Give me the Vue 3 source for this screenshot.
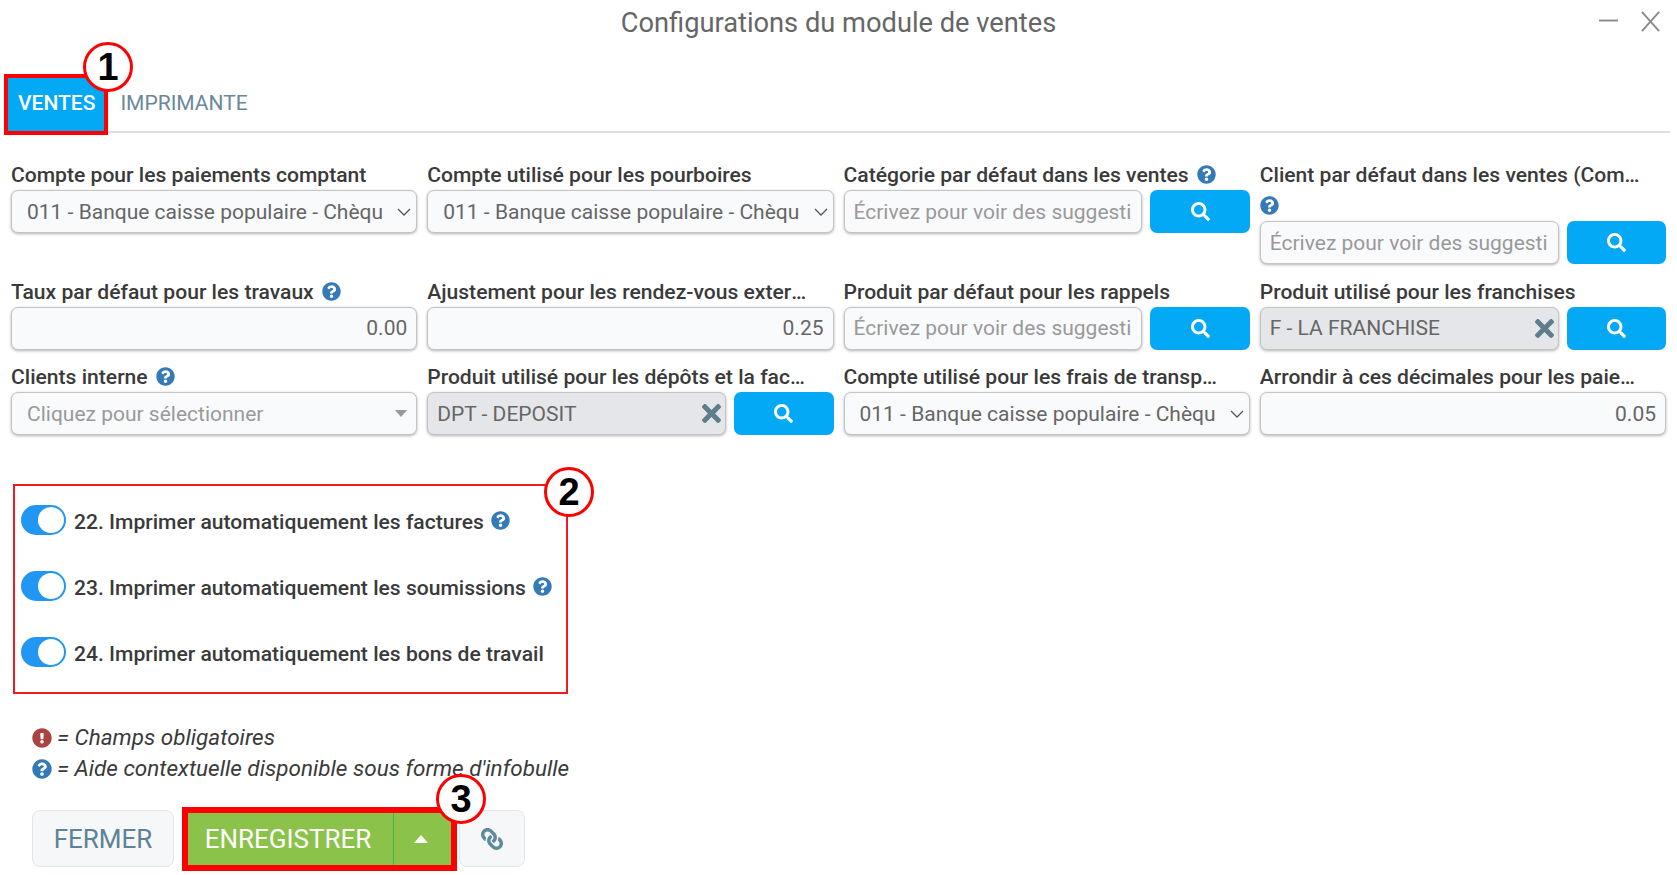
<script setup>
const helpIcon = 'M504 256c0 136.997-111.043 248-248 248S8 392.997 8 256C8 119.083 119.043 8 256 8s248 111.083 248 248zM262.655 90c-54.497 0-89.255 22.957-116.549 63.758-3.536 5.286-2.353 12.415 2.715 16.258l34.699 26.31c5.205 3.947 12.621 3.008 16.665-2.122 17.864-22.658 30.113-35.797 57.303-35.797 20.429 0 45.698 13.148 45.698 32.958 0 14.976-12.363 22.667-32.534 33.976C247.128 238.528 216 254.941 216 296v4c0 6.627 5.373 12 12 12h56c6.627 0 12-5.373 12-12v-1.333c0-28.462 83.186-29.647 83.186-106.667 0-58.002-60.165-102-116.531-102zM256 338c-25.365 0-46 20.635-46 46 0 25.364 20.635 46 46 46s46-20.636 46-46c0-25.365-20.635-46-46-46z'
const alertIcon = 'M504 256c0 136.997-111.043 248-248 248S8 392.997 8 256C8 119.083 119.043 8 256 8s248 111.083 248 248zm-248 50c-25.405 0-46 20.595-46 46s20.595 46 46 46 46-20.595 46-46-20.595-46-46-46zm-43.673-165.346l7.418 136c.347 6.364 5.609 11.346 11.982 11.346h48.546c6.373 0 11.635-4.982 11.982-11.346l7.418-136c.375-6.874-5.098-12.654-11.982-12.654h-63.383c-6.884 0-12.356 5.78-11.981 12.654z'
const searchIcon = 'M505 442.7L405.3 343c-4.5-4.5-10.6-7-17-7H372c27.6-35.3 44-79.7 44-128C416 93.1 322.9 0 208 0S0 93.1 0 208s93.1 208 208 208c48.3 0 92.7-16.4 128-44v16.3c0 6.4 2.5 12.5 7 17l99.7 99.7c9.4 9.4 24.6 9.4 33.9 0l28.3-28.3c9.4-9.4 9.4-24.6.1-34zM208 336c-70.7 0-128-57.2-128-128 0-70.7 57.2-128 128-128 70.7 0 128 57.2 128 128 0 70.7-57.2 128-128 128z'
const clearIcon = 'M242.72 256l100.07-100.07c12.28-12.28 12.28-32.19 0-44.48l-22.24-22.24c-12.28-12.28-32.19-12.28-44.48 0L176 189.28 75.93 89.21c-12.28-12.28-32.19-12.28-44.48 0L9.21 111.45c-12.28 12.28-12.28 32.19 0 44.48L109.28 256 9.21 356.07c-12.28 12.28-12.28 32.19 0 44.48l22.24 22.24c12.28 12.28 32.2 12.28 44.48 0L176 322.72l100.07 100.07c12.28 12.28 32.2 12.28 44.48 0l22.24-22.24c12.28-12.28 12.28-32.19 0-44.48L242.72 256z'
const linkIcon = 'M326.612 185.391c59.747 59.809 58.927 155.698.36 214.59-.11.12-.24.25-.36.37l-67.2 67.2c-59.27 59.27-155.699 59.262-214.96 0-59.27-59.26-59.27-155.7 0-214.96l37.106-37.106c9.84-9.84 26.786-3.3 27.294 10.606.648 17.722 3.826 35.527 9.69 52.721 1.986 5.822.567 12.262-3.783 16.612l-13.087 13.087c-28.026 28.026-28.905 73.66-1.155 101.96 28.024 28.579 74.086 28.749 102.325.51l67.2-67.19c28.191-28.191 28.073-73.757 0-101.83-3.701-3.694-7.429-6.564-10.341-8.569a16.037 16.037 0 0 1-6.947-12.606c-.396-10.567 3.348-21.456 11.698-29.806l21.054-21.055c5.521-5.521 14.182-6.199 20.584-1.731a152.482 152.482 0 0 1 20.522 17.197zM467.547 44.449c-59.261-59.262-155.69-59.27-214.96 0l-67.2 67.2c-.12.12-.25.25-.36.37-58.566 58.892-59.387 154.781.36 214.59a152.454 152.454 0 0 0 20.521 17.196c6.402 4.468 15.064 3.789 20.584-1.731l21.054-21.055c8.35-8.35 12.094-19.239 11.698-29.806a16.037 16.037 0 0 0-6.947-12.606c-2.912-2.005-6.64-4.875-10.341-8.569-28.073-28.073-28.191-73.639 0-101.83l67.2-67.19c28.239-28.239 74.3-28.069 102.325.51 27.75 28.3 26.872 73.934-1.155 101.96l-13.087 13.087c-4.35 4.35-5.769 10.79-3.783 16.612 5.864 17.194 9.042 34.999 9.69 52.721.509 13.906 17.454 20.446 27.294 10.606l37.106-37.106c59.27-59.26 59.27-155.7.001-214.959z'

const compte = '011 - Banque caisse populaire - Chèque'
const suggest = 'Écrivez pour voir des suggestions'

const fields = [
  { label: 'Compte pour les paiements comptant', type: 'select', value: compte },
  { label: 'Compte utilisé pour les pourboires', type: 'select', value: compte },
  { label: 'Catégorie par défaut dans les ventes', help: true, type: 'search' },
  { label: 'Client par défaut dans les ventes (Compte client)', help: true, type: 'search' },
  { label: 'Taux par défaut pour les travaux', help: true, type: 'number', value: '0.00' },
  { label: 'Ajustement pour les rendez-vous externes (heures)', type: 'number', value: '0.25' },
  { label: 'Produit par défaut pour les rappels', type: 'search' },
  { label: 'Produit utilisé pour les franchises', type: 'search', value: 'F - LA FRANCHISE' },
  { label: 'Clients interne', help: true, type: 'multi' },
  { label: 'Produit utilisé pour les dépôts et la facturation', type: 'search', value: 'DPT - DEPOSIT' },
  { label: 'Compte utilisé pour les frais de transport et livraison', type: 'select', value: compte },
  { label: 'Arrondir à ces décimales pour les paiements comptant', type: 'number', value: '0.05' }
]

const toggles = [
  { label: '22. Imprimer automatiquement les factures', help: true },
  { label: '23. Imprimer automatiquement les soumissions', help: true },
  { label: '24. Imprimer automatiquement les bons de travail', help: false }
]

const badges = [
  { n: 1, cls: 'badge-1' },
  { n: 2, cls: 'badge-2' },
  { n: 3, cls: 'badge-3' }
]
</script>

<template>
  <div class="page">
    <header class="title-bar">
      <h1 class="title">Configurations du module de ventes</h1>
      <div class="window-btns">
        <svg class="win-icon" viewBox="0 0 22 22"><path d="M1 10h20" /></svg>
        <svg class="win-icon" viewBox="0 0 22 22"><path d="M2 1l18 20M20 1L2 21" /></svg>
      </div>
    </header>

    <nav class="tabs">
      <span class="tab active">VENTES</span>
      <span class="tab">IMPRIMANTE</span>
    </nav>

    <section class="form-grid">
      <div v-for="f in fields" :key="f.label" class="field">
        <label class="field-label">
          <span class="label-text">{{ f.label }}</span>
          <svg v-if="f.help" class="help" viewBox="0 0 512 512"><path :d="helpIcon" /></svg>
        </label>

        <div v-if="f.type === 'select'" class="select-wrap">
          <select class="control select">
            <option>{{ f.value }}</option>
          </select>
          <svg class="chevron" viewBox="0 0 14 8"><path d="M1 1l6 6 6-6" /></svg>
        </div>

        <input v-else-if="f.type === 'number'" class="control number" type="text" :value="f.value" readonly />

        <div v-else-if="f.type === 'multi'" class="control multi">
          <span>Cliquez pour sélectionner</span>
          <i class="multi-caret"></i>
        </div>

        <div v-else class="search-row">
          <div v-if="f.value" class="control picked">
            <span>{{ f.value }}</span>
            <svg class="clear" viewBox="0 80 352 352"><path :d="clearIcon" /></svg>
          </div>
          <input v-else class="control suggest" type="text" :placeholder="suggest" readonly />
          <button class="search-btn" type="button">
            <svg viewBox="0 0 512 512"><path :d="searchIcon" /></svg>
          </button>
        </div>
      </div>
    </section>

    <section class="toggle-box">
      <div v-for="t in toggles" :key="t.label" class="toggle-row">
        <span class="switch"><i class="knob"></i></span>
        <span class="toggle-label">{{ t.label }}</span>
        <svg v-if="t.help" class="help toggle-help" viewBox="0 0 512 512"><path :d="helpIcon" /></svg>
      </div>
    </section>

    <section class="legend">
      <p>
        <svg class="legend-icon alert" viewBox="0 0 512 512"><path :d="alertIcon" /></svg>
        <span>= Champs obligatoires</span>
      </p>
      <p>
        <svg class="legend-icon" viewBox="0 0 512 512"><path :d="helpIcon" /></svg>
        <span>= Aide contextuelle disponible sous forme d'infobulle</span>
      </p>
    </section>

    <footer class="actions">
      <button class="btn btn-close" type="button">FERMER</button>
      <div class="btn-save">
        <span class="save-text">ENREGISTRER</span>
        <span class="save-caret"><i></i></span>
      </div>
      <button class="btn btn-link" type="button">
        <svg viewBox="0 0 512 512"><path :d="linkIcon" /></svg>
      </button>
    </footer>

    <!-- annotations posees sur la capture -->
    <div class="mark mark-tab"></div>
    <div class="mark mark-save"></div>
    <div v-for="b in badges" :key="b.n" class="badge" :class="b.cls">{{ b.n }}</div>
  </div>
</template>

<style>
html, body {
  margin: 0;
  background: #fff;
}
</style>

<style scoped>
.page {
  position: relative;
  height: 875px;
  overflow: hidden;
  font-family: Roboto, "Liberation Sans", sans-serif;
  color: #3a3a3a;
  background: #fff;
}

.title-bar {
  display: flex;
  align-items: center;
  justify-content: center;
  position: relative;
  height: 46px;
}

.title {
  margin: 0;
  font-size: 27.25px;
  font-weight: 400;
  color: #666;
}

.window-btns {
  position: absolute;
  top: 11px;
  right: 16px;
  display: flex;
  gap: 21px;
}

.win-icon {
  width: 21px;
  height: 21px;
  fill: none;
  stroke: #8a8a8a;
  stroke-width: 2;
}

.tabs {
  display: flex;
  margin: 32px 7px 0;
  height: 53px;
  border-bottom: 2px solid #dedede;
}

.tab {
  display: flex;
  align-items: center;
  padding: 0 11px 4px;
  font-size: 21px;
  color: #6b8899;
}

.tab.active {
  background: #03a9f4;
  color: #fff;
  font-weight: 500;
  margin-right: 3px;
}

.form-grid {
  display: grid;
  grid-template-columns: repeat(4, 1fr);
  column-gap: 10px;
  row-gap: 10.5px;
  margin: 25px 11px 0;
}

.field {
  min-width: 0;
}

.field-label {
  display: flex;
  flex-wrap: wrap;
  align-items: flex-start;
  column-gap: 8px;
  font-size: 21.1px;
  font-weight: 500;
  margin-bottom: 1px;
}

.label-text {
  max-width: 381px;
  padding: 3px 0 1px;
  line-height: 27px;
  overflow: hidden;
  white-space: nowrap;
  text-overflow: ellipsis;
}

.help {
  width: 19px;
  height: 19px;
  margin: 7px 0 5px;
  fill: #337ab7;
  flex-shrink: 0;
}

.toggle-help {
  margin: 0;
}

.control {
  box-sizing: border-box;
  height: 43px;
  width: 100%;
  border: 1px solid #c4c4c4;
  border-radius: 7px;
  background: #f9fafc;
  box-shadow: 0 1px 3px rgba(0, 0, 0, 0.3);
  font-family: inherit;
  font-size: 21px;
  color: #666;
  outline: none;
}

.select-wrap {
  position: relative;
}

.select {
  display: block;
  appearance: none;
  padding: 0 33px 0 15px;
}

.chevron {
  position: absolute;
  top: 18px;
  right: 6px;
  width: 14px;
  height: 8px;
  fill: none;
  stroke: #555;
  stroke-width: 1.3;
  pointer-events: none;
}

.number {
  display: block;
  padding: 0 9px;
  text-align: right;
}

.multi {
  display: flex;
  align-items: center;
  justify-content: space-between;
  padding: 0 9px 0 15px;
  color: #999;
}

.multi-caret {
  width: 0;
  height: 0;
  border-left: 6px solid transparent;
  border-right: 6px solid transparent;
  border-top: 7px solid #999;
}

.search-row {
  display: flex;
  gap: 8px;
}

.suggest {
  flex: 1;
  min-width: 0;
  padding: 0 10px 0 9px;
}

.suggest::placeholder {
  color: #999;
}

.picked {
  flex: 1;
  min-width: 0;
  display: flex;
  align-items: center;
  justify-content: space-between;
  padding: 0 4px 0 9px;
  background: #e4e6ea;
}

.clear {
  width: 19px;
  height: 19px;
  fill: #607d8b;
}

.search-btn {
  flex: 0 0 99.5px;
  height: 43px;
  border: none;
  border-radius: 7px;
  background: #03a9f4;
  display: flex;
  align-items: center;
  justify-content: center;
  padding: 0;
}

.search-btn svg {
  width: 19px;
  height: 19px;
  fill: #fff;
}

.toggle-box {
  box-sizing: border-box;
  width: 555px;
  margin: 49px 0 0 13px;
  padding: 19px 6px 25px;
  border: 2px solid #f01a24;
  display: flex;
  flex-direction: column;
  gap: 36px;
}

.toggle-row {
  display: flex;
  align-items: center;
  height: 30px;
}

.switch {
  position: relative;
  flex-shrink: 0;
  width: 45px;
  height: 30px;
  border-radius: 15px;
  background: #2196f3;
  margin-right: 8px;
}

.knob {
  position: absolute;
  top: 2px;
  right: 2px;
  width: 26px;
  height: 26px;
  border-radius: 50%;
  background: #fff;
}

.toggle-label {
  font-size: 21.1px;
  font-weight: 500;
  margin-right: 7px;
  padding-top: 2px;
}

.legend {
  margin: 28px 0 0 32px;
  font-size: 22.5px;
  font-style: italic;
  line-height: 31px;
}

.legend p {
  margin: 0;
  display: flex;
  align-items: center;
  gap: 5px;
}

.legend-icon {
  width: 20px;
  height: 20px;
  fill: #337ab7;
}

.legend-icon.alert {
  fill: #a94442;
}

.actions {
  display: flex;
  gap: 8px;
  margin: 26px 0 0 32px;
  height: 57px;
}

.btn {
  box-sizing: border-box;
  height: 57px;
  background: #f5f7f9;
  border: 1px solid #e2e6ea;
  border-radius: 8px;
  font-family: inherit;
  color: #5f8296;
  display: flex;
  align-items: center;
  justify-content: center;
  padding: 0;
}

.btn-close {
  width: 142px;
  font-size: 26px;
}

.btn-link {
  width: 66px;
}

.btn-link svg {
  width: 22px;
  height: 22px;
  fill: #5f8a9e;
  transform: scaleX(-1);
}

.btn-save {
  display: flex;
  width: 269px;
  height: 57px;
  background: #8bc34a;
  color: #fff;
  font-size: 26px;
}

.save-text {
  display: flex;
  align-items: center;
  justify-content: center;
  box-sizing: border-box;
  width: 212px;
  padding-left: 1px;
  border-right: 1px solid #4caf50;
}

.save-caret {
  flex: 1;
  display: flex;
  align-items: center;
  justify-content: center;
  padding-right: 3px;
}

.save-caret i {
  width: 0;
  height: 0;
  border-left: 7px solid transparent;
  border-right: 7px solid transparent;
  border-bottom: 8px solid #fff;
}

.mark {
  position: absolute;
  box-sizing: border-box;
  border-style: solid;
  border-color: #f00;
  pointer-events: none;
}

.mark-tab {
  left: 4px;
  top: 74px;
  width: 104px;
  height: 61px;
  border-width: 4px;
}

.mark-save {
  left: 182px;
  top: 807px;
  width: 275px;
  height: 64px;
  border-width: 6px;
}

.badge {
  position: absolute;
  box-sizing: border-box;
  width: 50px;
  height: 50px;
  border: 3px solid #f00;
  border-radius: 50%;
  background: #fff;
  color: #000;
  font-family: "Liberation Sans", Arial, sans-serif;
  font-size: 38px;
  font-weight: 700;
  line-height: 44px;
  text-align: center;
}

.badge-1 {
  left: 83px;
  top: 42px;
}

.badge-2 {
  left: 544px;
  top: 467px;
}

.badge-3 {
  left: 436px;
  top: 774px;
}
</style>
